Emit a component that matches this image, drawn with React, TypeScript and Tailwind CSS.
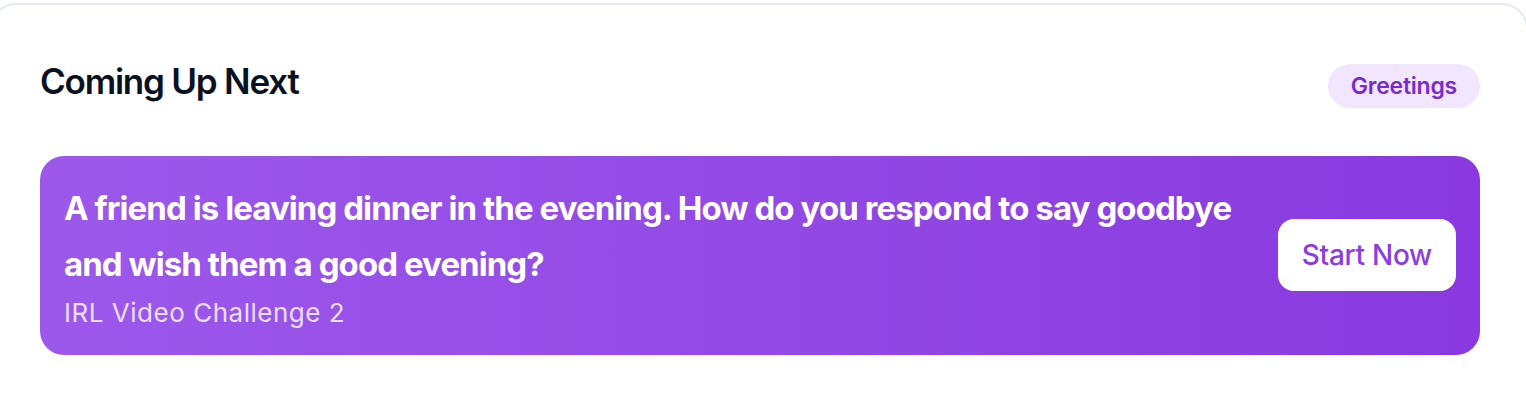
export default function App() {
  return (
    <div className="h-screen bg-white pt-[3px] font-['Inter',sans-serif] overflow-hidden">
      <section className="-ml-[10px] -mr-[2px] rounded-[26px] border-2 border-[#e6eaf0] bg-white pl-[48px] pr-[46px] pt-[48px] pb-[80px]">
        <div className="flex items-baseline justify-between mb-[47px]">
          <h2 className="text-[35px] leading-[56px] font-semibold tracking-[-0.035em] text-[#0b1120]">
            Coming Up Next
          </h2>
          <span className="rounded-full bg-[#f1e6fd] px-[23px] py-[8px] text-[23px] leading-[28px] font-semibold tracking-[-0.01em] text-[#7a2bcc]">
            Greetings
          </span>
        </div>

        <div className="flex items-center gap-[24px] rounded-[24px] bg-gradient-to-r from-[#9c58eb] to-[#8939df] pl-[24px] pr-[24px] pt-[24px] pb-[26px]">
          <div className="flex-1 min-w-0">
            <p className="text-[33px] leading-[56px] font-bold tracking-[-0.028em] text-white">
              A friend is leaving dinner in the evening. How do you respond to say goodbye and wish them a good evening?
            </p>
            <p className="mt-[5px] text-[26px] leading-[32px] tracking-[0.02em] text-white/80">IRL Video Challenge 2</p>
          </div>
          <button className="shrink-0 rounded-[16px] bg-white px-[24px] h-[72px] text-[28px] font-medium tracking-[-0.01em] text-[#8a3de0]">
            Start Now
          </button>
        </div>
      </section>
    </div>
  )
}
